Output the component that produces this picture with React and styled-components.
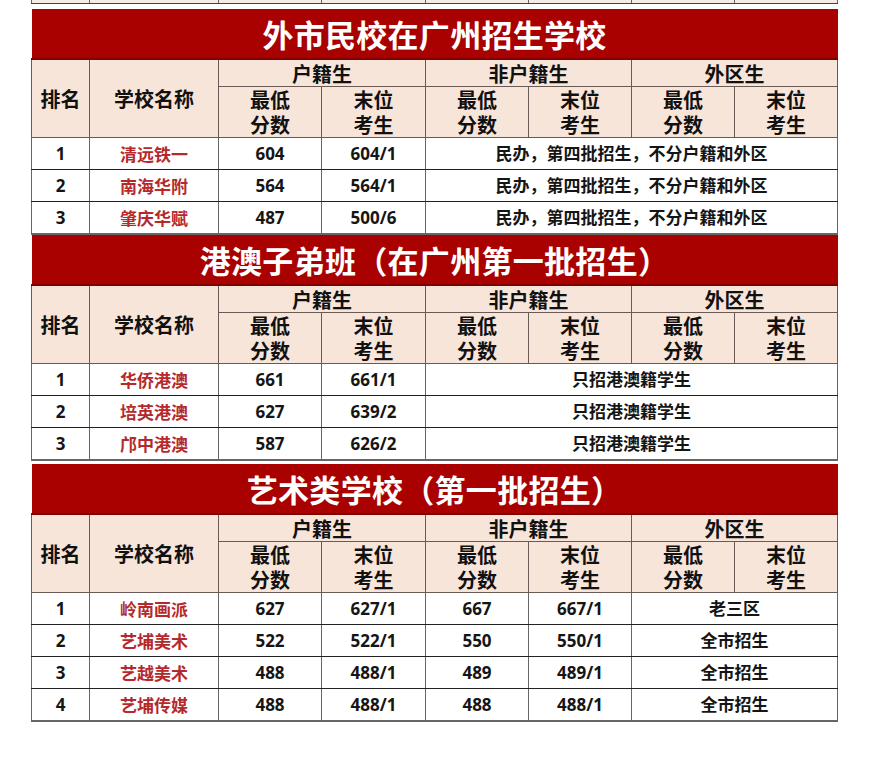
import React from "react";
import styled, { createGlobalStyle } from "styled-components";

const GlobalStyle = createGlobalStyle`
  html, body {
    margin: 0;
    padding: 0;
    background: #ffffff;
  }
  body {
    font-family: "Open Sans", "Noto Sans CJK SC", sans-serif;
    color: #111111;
  }
`;

const COLS = [58, 129, 103, 104, 103, 103, 103, 103];

const Page = styled.div`
  padding: 0 0 0 31px;
  width: 806px;
`;

const Table = styled.table`
  width: 806px;
  table-layout: fixed;
  border-collapse: collapse;
  margin-top: ${({ gap }) => gap}px;
`;

const Strip = styled.td`
  height: 3px;
  padding: 0;
  background: #f7ece5;
  border-left: 1px solid #666;
  border-right: 1px solid #666;
  border-bottom: 1.5px solid #444;
`;

const Banner = styled.th`
  height: 49px;
  padding: 0;
  background: #a90000;
  border-bottom: 2px solid #7e0000;
  color: #ffffff;
  font-family: "Noto Sans CJK SC", sans-serif;
  font-size: 31px;
  font-weight: 700;
  line-height: 47px;
  text-align: center;
  letter-spacing: 0.3px;
`;

const Head = styled.th`
  height: ${({ tall }) => (tall ? 50 : 26)}px;
  padding: 0;
  background: #f8e5da;
  border: 1px solid #6a5a55;
  font-family: "Noto Sans CJK SC", sans-serif;
  font-size: 20px;
  font-weight: 700;
  line-height: 25px;
  text-align: center;
  vertical-align: middle;
`;

const Line = styled.span`
  display: block;
  height: 25px;
  line-height: 25px;
`;

const Cell = styled.td`
  height: 31px;
  padding: 0;
  background: #ffffff;
  border-left: 1px solid #666;
  border-right: 1px solid #666;
  border-bottom: 1.5px solid #222;
  font-size: 17px;
  font-weight: 700;
  line-height: 31px;
  text-align: center;
  color: ${({ red }) => (red ? "#b42a2c" : "#151515")};
  font-family: ${({ red }) =>
    red ? '"Noto Sans CJK SC", sans-serif' : '"Open Sans", "Noto Sans CJK SC", sans-serif'};
  ${({ last }) => (last ? "border-bottom: 2px solid #666;" : "")}
`;

const sections = [
  {
    title: "外市民校在广州招生学校",
    gap: 5,
    rows: [
      ["1", "清远铁一", "604", "604/1", { note: "民办，第四批招生，不分户籍和外区" }],
      ["2", "南海华附", "564", "564/1", { note: "民办，第四批招生，不分户籍和外区" }],
      ["3", "肇庆华赋", "487", "500/6", { note: "民办，第四批招生，不分户籍和外区" }],
    ],
  },
  {
    title: "港澳子弟班（在广州第一批招生）",
    gap: 0,
    rows: [
      ["1", "华侨港澳", "661", "661/1", { note: "只招港澳籍学生" }],
      ["2", "培英港澳", "627", "639/2", { note: "只招港澳籍学生" }],
      ["3", "邝中港澳", "587", "626/2", { note: "只招港澳籍学生" }],
    ],
  },
  {
    title: "艺术类学校（第一批招生）",
    gap: 3,
    rows: [
      ["1", "岭南画派", "627", "627/1", "667", "667/1", { area: "老三区" }],
      ["2", "艺埔美术", "522", "522/1", "550", "550/1", { area: "全市招生" }],
      ["3", "艺越美术", "488", "488/1", "489", "489/1", { area: "全市招生" }],
      ["4", "艺埔传媒", "488", "488/1", "488", "488/1", { area: "全市招生" }],
    ],
  },
];

function Cols() {
  return (
    <colgroup>
      {COLS.map((w, i) => (
        <col key={i} style={{ width: w }} />
      ))}
    </colgroup>
  );
}

function HeaderRows() {
  return (
    <>
      <tr>
        <Head rowSpan={2}>排名</Head>
        <Head rowSpan={2}>学校名称</Head>
        <Head colSpan={2}>户籍生</Head>
        <Head colSpan={2}>非户籍生</Head>
        <Head colSpan={2}>外区生</Head>
      </tr>
      <tr>
        {[0, 1, 2].map((g) => (
          <React.Fragment key={g}>
            <Head tall>
              <Line>最低</Line>
              <Line>分数</Line>
            </Head>
            <Head tall>
              <Line>末位</Line>
              <Line>考生</Line>
            </Head>
          </React.Fragment>
        ))}
      </tr>
    </>
  );
}

function DataRow({ row, last }) {
  const tail = row[row.length - 1];
  const values = row.slice(0, row.length - 1);
  return (
    <tr>
      {values.map((v, i) => (
        <Cell key={i} red={i === 1} last={last}>
          {v}
        </Cell>
      ))}
      {tail.note && (
        <Cell colSpan={4} last={last}>
          {tail.note}
        </Cell>
      )}
      {tail.area && (
        <Cell colSpan={2} last={last}>
          {tail.area}
        </Cell>
      )}
    </tr>
  );
}

function Section({ title, gap, rows }) {
  return (
    <Table gap={gap}>
      <Cols />
      <thead>
        <tr>
          <Banner colSpan={8}>{title}</Banner>
        </tr>
        <HeaderRows />
      </thead>
      <tbody>
        {rows.map((r, i) => (
          <DataRow key={i} row={r} last={i === rows.length - 1} />
        ))}
      </tbody>
    </Table>
  );
}

export default function App() {
  return (
    <Page>
      <GlobalStyle />
      <Table gap={0}>
        <Cols />
        <tbody>
          <tr>
            {COLS.map((_, i) => (
              <Strip key={i} />
            ))}
          </tr>
        </tbody>
      </Table>
      {sections.map((s) => (
        <Section key={s.title} {...s} />
      ))}
    </Page>
  );
}
